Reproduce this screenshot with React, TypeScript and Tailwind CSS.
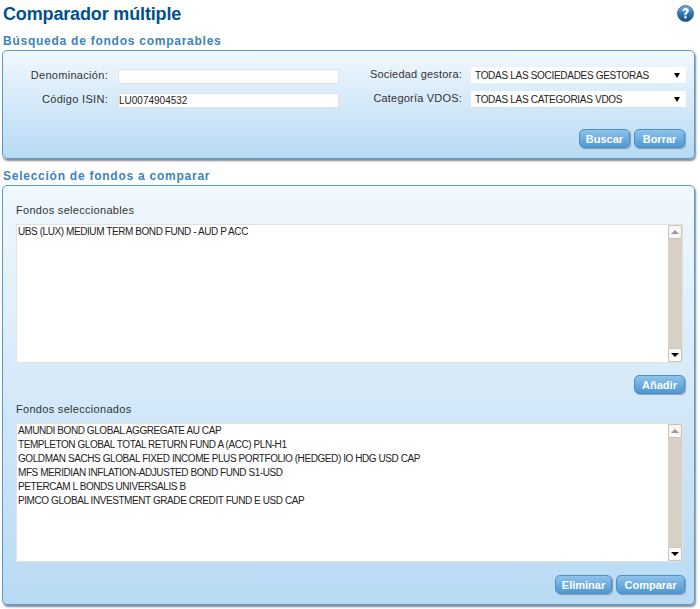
import type { ReactNode } from 'react'

const availableFunds = ['UBS (LUX) MEDIUM TERM BOND FUND - AUD P ACC']

const selectedFunds = [
  'AMUNDI BOND GLOBAL AGGREGATE AU CAP',
  'TEMPLETON GLOBAL TOTAL RETURN FUND A (ACC) PLN-H1',
  'GOLDMAN SACHS GLOBAL FIXED INCOME PLUS PORTFOLIO (HEDGED) IO HDG USD CAP',
  'MFS MERIDIAN INFLATION-ADJUSTED BOND FUND S1-USD',
  'PETERCAM L BONDS UNIVERSALIS B',
  'PIMCO GLOBAL INVESTMENT GRADE CREDIT FUND E USD CAP'
]

function HelpIcon() {
  return (
    <svg width="17" height="17" viewBox="0 0 17 17" aria-hidden>
      <defs>
        <linearGradient id="help" x1="0" y1="0" x2="0" y2="1">
          <stop offset="0" stopColor="#7fb2dc" />
          <stop offset="0.5" stopColor="#2f78b5" />
          <stop offset="1" stopColor="#174f82" />
        </linearGradient>
      </defs>
      <circle cx="8.5" cy="8.5" r="8" fill="url(#help)" stroke="#2a5f8d" strokeWidth="0.8" />
      <path
        d="M5.4 6.2c0-2 1.3-3.2 3.2-3.2 1.9 0 3.2 1.1 3.2 2.7 0 1.2-.6 1.9-1.5 2.5-.6.4-.9.8-.9 1.5v.5H7.3v-.7c0-1.1.4-1.7 1.1-2.2.6-.4.9-.8.9-1.4 0-.7-.3-1-.8-1-.6 0-.9.5-.9 1.2z"
        fill="#fff"
      />
      <rect x="7.3" y="11.2" width="2.2" height="2.2" fill="#fff" />
    </svg>
  )
}

function PanelButton({ children, className }: { children: ReactNode; className: string }) {
  return (
    <button
      type="button"
      className={`h-[19px] rounded-[5px] border border-[#4d90c8] bg-gradient-to-b from-[#8ec3ea] to-[#4f97d3] text-center text-[11px] font-bold leading-[16px] text-white shadow-[1px_1px_1px_rgba(60,80,100,0.45)] ${className}`}
    >
      {children}
    </button>
  )
}

function Scrollbar() {
  return (
    <div className="flex w-[14px] shrink-0 flex-col bg-[#d6d0c5]">
      <div className="flex h-[14px] items-center justify-center rounded-[2px] border border-[#c9c5ba] bg-[#f7f6f2]">
        <div className="h-0 w-0 border-x-[4px] border-b-[4px] border-x-transparent border-b-[#9a9a9a]" />
      </div>
      <div className="flex-1" />
      <div className="flex h-[14px] items-center justify-center rounded-[2px] border border-[#c9c5ba] bg-[#fbfbf9]">
        <div className="h-0 w-0 border-x-[4px] border-t-[4px] border-x-transparent border-t-black" />
      </div>
    </div>
  )
}

function FundList({ funds }: { funds: string[] }) {
  return (
    <div className="mr-[2px] flex h-[139px] border border-[#e4e2dc] bg-white">
      <div className="flex-1 pl-[1px] text-[10px] leading-[14px] tracking-[-0.42px] text-[#222]">
        {funds.map((fund) => (
          <div key={fund} className="h-[14px] whitespace-nowrap">
            {fund}
          </div>
        ))}
      </div>
      <Scrollbar />
    </div>
  )
}

function SelectBox({ value }: { value: string }) {
  return (
    <div className="flex h-[16px] w-[215px] items-center justify-between rounded-[1px] bg-white pl-[4px] pr-[4px] text-[10px] tracking-[-0.3px] text-[#222]">
      <span className="whitespace-nowrap">{value}</span>
      <span className="mr-[2px] h-0 w-0 border-x-[3px] border-t-[5px] border-x-transparent border-t-black" />
    </div>
  )
}

function TextField({ value }: { value: string }) {
  return (
    <input
      readOnly
      value={value}
      className="h-[15px] w-[221px] border border-[#e4e2dc] bg-white text-[10px] tracking-normal text-[#222] outline-none"
    />
  )
}

function SectionTitle({ children, className }: { children: ReactNode; className: string }) {
  return <h2 className={`pl-[1px] text-[12px] font-bold leading-[14px] tracking-[0.75px] text-[#3b84bd] ${className}`}>{children}</h2>
}

export default function App() {
  return (
    <div className="h-[609px] w-[700px] overflow-hidden bg-white pl-[2px] pr-[5px] font-['Liberation_Sans',Arial,sans-serif]">
      <div className="flex h-[27px] items-center justify-between pl-[1px] pr-[1px]">
        <h1 className="text-[18px] font-bold leading-[22px] tracking-[-0.15px] text-[#00508f]">Comparador múltiple</h1>
        <HelpIcon />
      </div>

      <SectionTitle className="mt-[7px]">Búsqueda de fondos comparables</SectionTitle>

      <section className="mt-[2px] h-[109px] rounded-[5px] border border-[#5a9bd0] bg-gradient-to-b from-[#f1f8fe] to-[#b7daf3] shadow-[1px_2px_2px_rgba(50,60,70,0.6)]">
        <div className="flex pt-[16px]">
          <div className="grid w-[337px] grid-cols-[105px_221px] content-start items-start gap-x-[10px] gap-y-[9px] pt-[2px] text-[11px] leading-[13px] tracking-[0.3px] text-[#333]">
            <label className="text-right">Denominación:</label>
            <TextField value="" />
            <label className="text-right">Código ISIN:</label>
            <TextField value="LU0074904532" />
          </div>
          <div className="ml-[1px] grid grid-cols-[121px_215px] content-start items-start gap-x-[9px] gap-y-[8px] text-[11px] leading-[15px] tracking-[0.2px] text-[#333]">
            <label className="text-right">Sociedad gestora:</label>
            <SelectBox value="TODAS LAS SOCIEDADES GESTORAS" />
            <label className="text-right">Categoría VDOS:</label>
            <SelectBox value="TODAS LAS CATEGORIAS VDOS" />
          </div>
        </div>
        <div className="mr-[9px] mt-[21px] flex justify-end gap-[4px]">
          <PanelButton className="w-[51px]">Buscar</PanelButton>
          <PanelButton className="w-[51px]">Borrar</PanelButton>
        </div>
      </section>

      <SectionTitle className="mt-[10px]">Selección de fondos a comparar</SectionTitle>

      <section className="mt-[2px] h-[420px] rounded-[5px] border border-[#5a9bd0] bg-gradient-to-b from-[#f1f8fe] to-[#b7daf3] pl-[13px] pr-[9px] shadow-[1px_2px_2px_rgba(50,60,70,0.6)]">
        <p className="pt-[18px] text-[11px] leading-[13px] tracking-[0.3px] text-[#333]">Fondos seleccionables</p>
        <div className="mt-[7px]">
          <FundList funds={availableFunds} />
        </div>
        <div className="mt-[12px] flex justify-end">
          <PanelButton className="w-[51px]">Añadir</PanelButton>
        </div>
        <p className="mt-[9px] text-[11px] leading-[13px] tracking-[0.3px] text-[#333]">Fondos seleccionados</p>
        <div className="mt-[7px]">
          <FundList funds={selectedFunds} />
        </div>
        <div className="mt-[13px] flex justify-end gap-[4px]">
          <PanelButton className="w-[57px]">Eliminar</PanelButton>
          <PanelButton className="w-[69px]">Comparar</PanelButton>
        </div>
      </section>
    </div>
  )
}
